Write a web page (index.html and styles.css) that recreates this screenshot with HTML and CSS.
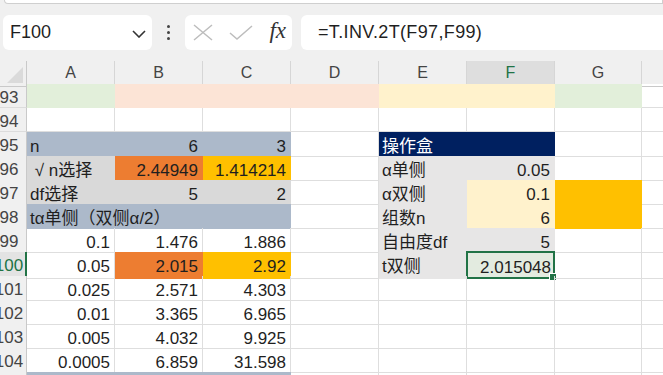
FILE: index.html
```html
<!DOCTYPE html>
<html lang="zh-CN">
<head>
  <meta charset="UTF-8" />
  <title>T.INV.2T</title>
  <link rel="stylesheet" href="styles.css">
</head>
<body>
  <div class="ribbon-edge"></div>

  <div class="formula-bar">
    <div class="name-box">
      <span>F100</span>
      <svg class="chevron" width="14" height="8" viewBox="0 0 14 8"><path d="M1 1 L7 7 L13 1" fill="none" stroke="#333" stroke-width="1.6"/></svg>
    </div>
    <div class="dots"><i></i><i></i><i></i></div>
    <div class="fx-box">
      <svg width="20" height="17" viewBox="0 0 20 17"><path d="M1 1 L19 16 M19 1 L1 16" stroke="#bdbdbd" stroke-width="1.5" fill="none"/></svg>
      <svg width="24" height="15" viewBox="0 0 24 15"><path d="M1 8 L8 14 L23 1" stroke="#bdbdbd" stroke-width="1.5" fill="none"/></svg>
      <span class="fx">fx</span>
    </div>
    <div class="formula">=T.INV.2T(F97,F99)</div>
  </div>

  <div class="sheet">
    <div class="row head">
      <div class="corner"><b></b></div>
      <div class="col">A</div>
      <div class="col">B</div>
      <div class="col">C</div>
      <div class="col">D</div>
      <div class="col">E</div>
      <div class="col active">F</div>
      <div class="col">G</div>
      <div class="col"></div>
    </div>

    <div class="row">
      <div class="rh"><span>93</span></div>
      <div class="c green"></div><div class="c peach"></div><div class="c peach"></div><div class="c peach"></div>
      <div class="c yellow"></div><div class="c yellow"></div><div class="c green"></div><div class="c"></div>
    </div>
    <div class="row">
      <div class="rh"><span>94</span></div>
      <div class="c"></div><div class="c"></div><div class="c"></div><div class="c"></div>
      <div class="c"></div><div class="c"></div><div class="c"></div><div class="c"></div>
    </div>
    <div class="row">
      <div class="rh"><span>95</span></div>
      <div class="c slate">n</div><div class="c slate num">6</div><div class="c slate num">3</div><div class="c"></div>
      <div class="c navy span2">操作盒</div><div class="c"></div><div class="c"></div>
    </div>
    <div class="row">
      <div class="rh"><span>96</span></div>
      <div class="c grey">&nbsp;√ n选择</div><div class="c orange num">2.44949</div><div class="c gold num">1.414214</div><div class="c"></div>
      <div class="c light">α单侧</div><div class="c light num">0.05</div><div class="c"></div><div class="c"></div>
    </div>
    <div class="row">
      <div class="rh"><span>97</span></div>
      <div class="c grey">df选择</div><div class="c grey num">5</div><div class="c grey num">2</div><div class="c"></div>
      <div class="c light">α双侧</div><div class="c yellow num">0.1</div><div class="c gold"></div><div class="c"></div>
    </div>
    <div class="row">
      <div class="rh"><span>98</span></div>
      <div class="c slate span3">tα单侧（双侧α/2）</div><div class="c"></div>
      <div class="c light">组数n</div><div class="c yellow num">6</div><div class="c gold"></div><div class="c"></div>
    </div>
    <div class="row">
      <div class="rh"><span>99</span></div>
      <div class="c num">0.1</div><div class="c num">1.476</div><div class="c num">1.886</div><div class="c"></div>
      <div class="c light">自由度df</div><div class="c light num">5</div><div class="c"></div><div class="c"></div>
    </div>
    <div class="row">
      <div class="rh active"><span>100</span></div>
      <div class="c num">0.05</div><div class="c orange num">2.015</div><div class="c gold num">2.92</div><div class="c"></div>
      <div class="c light">t双侧</div><div class="c sel num">2.015048<i class="handle"></i></div><div class="c"></div><div class="c"></div>
    </div>
    <div class="row">
      <div class="rh"><span>101</span></div>
      <div class="c num">0.025</div><div class="c num">2.571</div><div class="c num">4.303</div><div class="c"></div>
      <div class="c"></div><div class="c"></div><div class="c"></div><div class="c"></div>
    </div>
    <div class="row">
      <div class="rh"><span>102</span></div>
      <div class="c num">0.01</div><div class="c num">3.365</div><div class="c num">6.965</div><div class="c"></div>
      <div class="c"></div><div class="c"></div><div class="c"></div><div class="c"></div>
    </div>
    <div class="row">
      <div class="rh"><span>103</span></div>
      <div class="c num">0.005</div><div class="c num">4.032</div><div class="c num">9.925</div><div class="c"></div>
      <div class="c"></div><div class="c"></div><div class="c"></div><div class="c"></div>
    </div>
    <div class="row">
      <div class="rh"><span>104</span></div>
      <div class="c num">0.0005</div><div class="c num">6.859</div><div class="c num">31.598</div><div class="c"></div>
      <div class="c"></div><div class="c"></div><div class="c"></div><div class="c"></div>
    </div>
    <div class="row">
      <div class="rh"><span>105</span></div>
      <div class="c slate"></div><div class="c slate"></div><div class="c slate"></div><div class="c"></div>
      <div class="c"></div><div class="c"></div><div class="c"></div><div class="c"></div>
    </div>
  </div>
</body>
</html>
```

FILE: styles.css
```css
html, body {
  margin: 0;
  height: 100%;
  overflow: hidden;
  background: #f0f0f0;
  font-family: 'Liberation Sans', 'Noto Sans CJK SC', sans-serif;
  color: #1f1f1f;
}
.ribbon-edge {
  height: 3px;
  margin: 0 0 0 4px;
  background: #fff;
  border: 1px solid #cfcfcf;
  border-top: none;
  border-radius: 0 0 0 6px;
}
.formula-bar {
  display: flex;
  align-items: center;
  height: 35px;
  margin-top: 11px;
  padding-left: 3px;
}
.name-box, .fx-box, .formula {
  height: 35px;
  box-sizing: border-box;
  background: #fff;
  border-radius: 6px;
  display: flex;
  align-items: center;
}
.name-box {
  width: 149px;
  padding: 0 6px 0 7px;
  justify-content: space-between;
  font-size: 18px;
}
.chevron { margin-top: 2px; }
.dots {
  width: 33px;
  display: flex;
  flex-direction: column;
  align-items: center;
  gap: 3px;
}
.dots i {
  width: 3px;
  height: 3px;
  background: #444;
  border-radius: 50%;
}
.fx-box {
  width: 107px;
  padding: 0 6px 0 8px;
  justify-content: space-between;
}
.fx {
  font-family: 'Liberation Serif', serif;
  font-style: italic;
  font-size: 23px;
  color: #333;
  margin-bottom: 3px;
}
.formula {
  flex: 1;
  margin-left: 9px;
  padding-left: 17px;
  font-size: 18px;
  letter-spacing: 0.35px;
  border-radius: 6px 0 0 6px;
}

.sheet {
  margin-top: 11px;
  background: #fff;
}
.row {
  display: grid;
  grid-template-columns: 27px repeat(6, 88px) 87px 40px;
  height: 24px;
}
.row.head {
  height: 23px;
  background: #f0f0f0;
}
.corner {
  position: relative;
  border-right: 1px solid #c9c9c9;
  border-bottom: 1px solid #c9c9c9;
}
.corner b {
  position: absolute;
  right: 3px;
  bottom: 3px;
  width: 0;
  height: 0;
  border-left: 16px solid transparent;
  border-bottom: 16px solid #dadada;
}
.col {
  box-sizing: border-box;
  border-right: 1px solid #d6d6d6;
  border-bottom: 1px solid #c9c9c9;
  text-align: center;
  font-size: 16px;
  line-height: 24px;
  color: #444;
}
.col.active {
  background: #dedede;
  color: #217346;
  border-bottom: 2px solid #217346;
}
.rh {
  overflow: hidden;
  box-sizing: border-box;
  background: #f0f0f0;
  border-right: 1px solid #c9c9c9;
  border-bottom: 1px solid #dcdcdc;
  font-size: 17px;
  color: #444;
}
.rh span {
  display: block;
  width: 44px;
  margin-left: -13px;
  text-align: center;
  line-height: 19px;
  padding-top: 4px;
}
.rh.active {
  background: #e3e3e3;
  color: #217346;
  border-right: 2px solid #217346;
}

.c {
  position: relative;
  box-sizing: border-box;
  border-right: 1px solid #dedede;
  border-bottom: 1px solid #dedede;
  padding: 5px 3px 0 3px;
  font-size: 17px;
  line-height: 19px;
  white-space: nowrap;
}
.num { text-align: right; padding-right: 4px; }
.span2 { grid-column: span 2; }
.span3 { grid-column: span 3; }

.green { background: #e2efda; border-color: transparent; }
.peach { background: #fce4d6; border-color: transparent; }
.yellow { background: #fff2cc; border-color: transparent; }
.slate { background: #acb9ca; border-color: transparent; }
.grey { background: #d9d9d9; border-color: transparent; }
.light { background: #e7e6e6; border-color: transparent; }
.orange { background: #ed7d31; border-color: transparent; }
.gold { background: #ffc000; border-color: transparent; }
.navy { background: #002060; border-color: transparent; color: #fff; }

.sel {
  background: #e3ebe0;
  border: 2px solid #217346;
  margin: -1px 0 0 -1px;
  padding-top: 5px;
  padding-right: 2px;
}
.handle {
  position: absolute;
  right: -4px;
  bottom: -4px;
  width: 6px;
  height: 6px;
  background: #217346;
  border: 1px solid #fff;
}
```
